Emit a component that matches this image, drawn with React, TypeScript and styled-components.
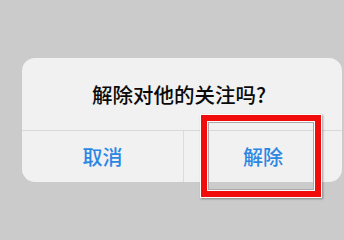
import styled, { createGlobalStyle } from "styled-components";

const GlobalStyle = createGlobalStyle`
  html, body {
    margin: 0;
    padding: 0;
    background: #cbcbcb;
  }
  body {
    font-family: "Noto Sans CJK SC", "Noto Sans", sans-serif;
  }
`;

export default function App() {
  return (
    <>
      <GlobalStyle />
      <Screen>
        <Dialog>
          <Message>解除对他的关注吗?</Message>
          <Actions>
            <ActionButton>取消</ActionButton>
            <ActionButton>解除</ActionButton>
          </Actions>
        </Dialog>
        <Highlight />
      </Screen>
    </>
  );
}

const Screen = styled.div`
  position: relative;
  width: 344px;
  height: 217px;
  padding: 58px 0 0 22px;
  box-sizing: border-box;
  overflow: hidden;
`;

const Dialog = styled.div`
  width: 320px;
  background: #f1f1f1;
  border-radius: 13px;
  display: flex;
  flex-direction: column;
`;

const Message = styled.div`
  height: 72px;
  display: flex;
  align-items: center;
  justify-content: center;
  font-size: 20.5px;
  font-weight: 500;
  color: #0a0a0a;
  border-bottom: 1px solid #d9d9d9;
  padding-right: 6px;
`;

const Actions = styled.div`
  display: grid;
  grid-template-columns: 161px 1fr;
  height: 51px;
`;

const ActionButton = styled.button`
  border: none;
  background: transparent;
  font-family: inherit;
  font-size: 20px;
  font-weight: 500;
  color: #2b87e2;
  display: flex;
  align-items: center;
  justify-content: center;
  padding: 0;

  & + & {
    border-left: 1px solid #dcdcdc;
  }
`;

const Highlight = styled.div`
  position: absolute;
  left: 200px;
  top: 114px;
  width: 122px;
  height: 84px;
  box-sizing: border-box;
  border: 1px solid #ffffff;
  box-shadow:
    1px 1px 2px rgba(0, 0, 0, 0.35),
    inset 0 0 0 6px #f20d0d,
    inset 0 0 0 7px #ffffff,
    inset 0 0 0 8px #a9a9a9;
`;
